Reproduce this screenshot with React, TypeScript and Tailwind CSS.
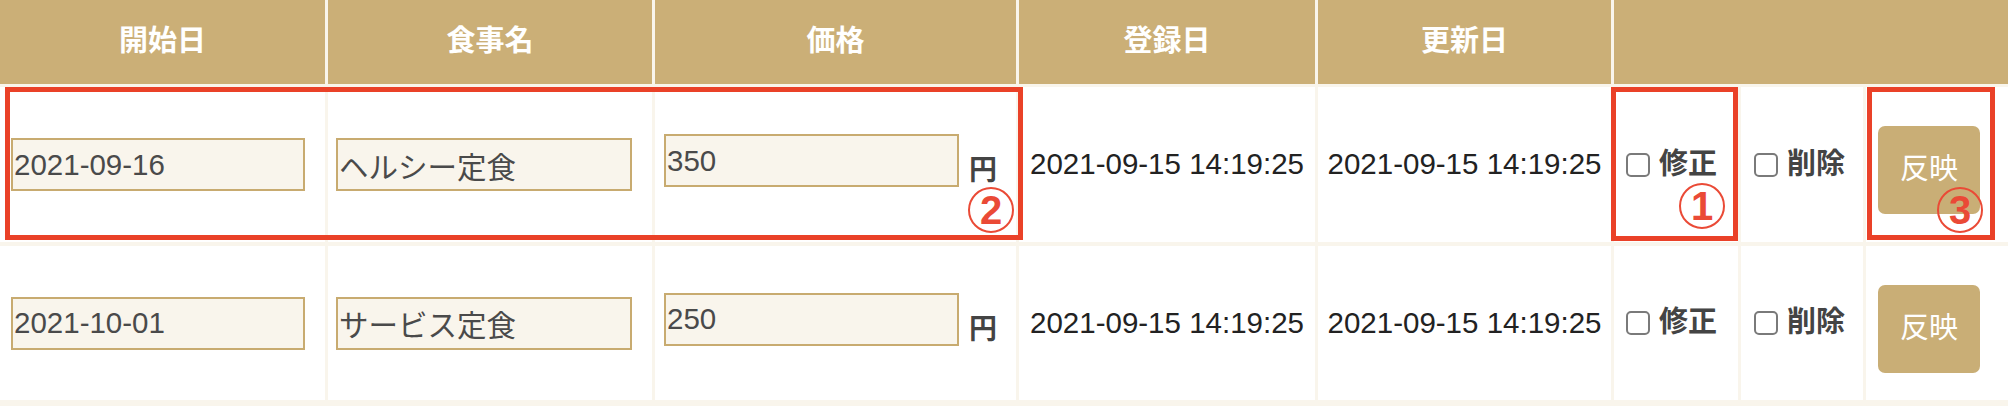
import React from "react";

const FONT = '"Liberation Sans", "Noto Sans CJK JP", sans-serif';

type Row = { start: string; name: string; price: string; created: string; updated: string };

const rows: Row[] = [
  { start: "2021-09-16", name: "ヘルシー定食", price: "350", created: "2021-09-15 14:19:25", updated: "2021-09-15 14:19:25" },
  { start: "2021-10-01", name: "サービス定食", price: "250", created: "2021-09-15 14:19:25", updated: "2021-09-15 14:19:25" },
];

function Field({ value, w }: { value: string; w: string }) {
  return (
    <input
      readOnly
      defaultValue={value}
      className={`${w} h-[53px] border-2 border-[#c8ab70] bg-[#f9f5ec] px-[1px] text-[29.5px] text-[#4a4a4a] outline-none`}
      style={{ fontFamily: FONT }}
    />
  );
}

function Check({ label, pl }: { label: string; pl: string }) {
  return (
    <div className={`bg-white flex items-center ${pl}`}>
      <span className="block w-[24px] h-[24px] border-2 border-[#7a7a7a] rounded-[5px] bg-white" />
      <span className="ml-[9px] text-[29px] font-bold text-[#444]">{label}</span>
    </div>
  );
}

function Circled({ n, left, top }: { n: string; left: string; top: string }) {
  return (
    <div
      className={`absolute ${left} ${top} w-[46px] h-[46px] rounded-full border-2 border-[#ea4a36] flex items-center justify-center text-[40px] font-bold leading-none text-[#ea4a36]`}
      style={{ fontFamily: '"Liberation Sans", sans-serif' }}
    >
      {n}
    </div>
  );
}

export default function App() {
  const headers = ["開始日", "食事名", "価格", "登録日", "更新日", ""];
  return (
    <div className="relative w-[2008px] h-[406px] bg-[#f9f5ec] overflow-hidden" style={{ fontFamily: FONT }}>
      <div className="grid grid-cols-[325px_324px_361px_296px_293px_1fr] gap-x-[3px] h-[84px]">
        {headers.map((h, i) => (
          <div key={i} className="bg-[#cbaf77] flex items-center justify-center text-white font-bold text-[29px]">
            {h}
          </div>
        ))}
      </div>
      <div className="grid grid-cols-[325px_324px_361px_296px_293px_124px_122px_1fr] grid-rows-[155px_154px] gap-x-[3px] gap-y-[4px] pt-[3px]">
        {rows.map((r, i) => (
          <React.Fragment key={i}>
            <div className="bg-white flex items-center pl-[11px]">
              <Field value={r.start} w="w-[294px]" />
            </div>
            <div className="bg-white flex items-center pl-[8px]">
              <Field value={r.name} w="w-[296px]" />
            </div>
            <div className="bg-white flex items-center pl-[9px]">
              <div className="mb-[8px]">
                <Field value={r.price} w="w-[295px]" />
              </div>
              <span className="ml-[10px] mt-[13px] text-[28px] font-bold text-[#444]">円</span>
            </div>
            <div className="bg-white flex items-center justify-center text-[29.5px] text-[#222]">{r.created}</div>
            <div className="bg-white flex items-center justify-center text-[29.5px] text-[#222]">{r.updated}</div>
            <Check label="修正" pl="pl-[12px]" />
            <Check label="削除" pl="pl-[13px]" />
            <div className="bg-white flex items-center pl-[12px]">
              <button className="mt-[11px] w-[102px] h-[88px] rounded-[7px] bg-[#c9ae76] text-white text-[29px]">
                反映
              </button>
            </div>
          </React.Fragment>
        ))}
      </div>

      {/* annotations */}
      <div className="absolute left-[5px] top-[87px] w-[1018px] h-[153px] border-[5px] border-[#ea4128]" />
      <div className="absolute left-[1611px] top-[87px] w-[127px] h-[154px] border-[5px] border-[#ea4128]" />
      <div className="absolute left-[1867px] top-[87px] w-[128px] h-[153px] border-[5px] border-[#ea4128]" />
      <Circled n="1" left="left-[1679px]" top="top-[183px]" />
      <Circled n="2" left="left-[968px]" top="top-[187px]" />
      <Circled n="3" left="left-[1937px]" top="top-[187px]" />
    </div>
  );
}
